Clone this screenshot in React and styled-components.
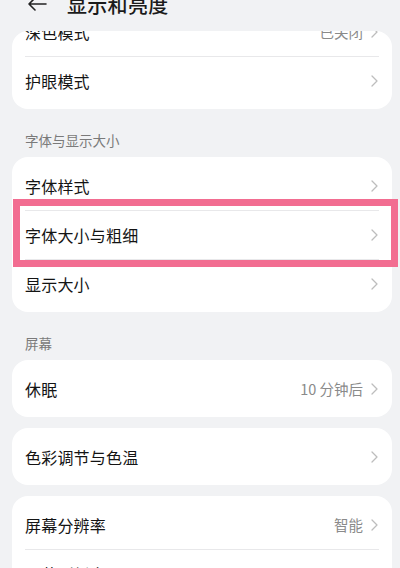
import React from 'react';
import styled, { createGlobalStyle } from 'styled-components';

const GlobalStyle = createGlobalStyle`
  html, body {
    margin: 0;
    padding: 0;
    background: #f1f2f4;
    font-family: "Noto Sans CJK SC", "Noto Sans", sans-serif;
  }
`;

const sections = [
  {
    cards: [
      {
        cut: true,
        rows: [
          { label: '深色模式', value: '已关闭' },
          { label: '护眼模式' },
        ],
      },
    ],
  },
  {
    title: '字体与显示大小',
    cards: [
      {
        rows: [
          { label: '字体样式' },
          { label: '字体大小与粗细', marked: true },
          { label: '显示大小' },
        ],
      },
    ],
  },
  {
    title: '屏幕',
    cards: [
      { rows: [{ label: '休眠', value: '10 分钟后' }] },
      { rows: [{ label: '色彩调节与色温' }] },
      {
        rows: [
          { label: '屏幕分辨率', value: '智能' },
          { label: '屏幕刷新率' },
        ],
      },
    ],
  },
];

const BackArrow = () => (
  <svg width="20" height="14" viewBox="0 0 20 14" fill="none">
    <path d="M19 7H2M8 1L2 7l6 6" stroke="#222" strokeWidth="1.6" strokeLinecap="round" strokeLinejoin="round" />
  </svg>
);

const Chevron = () => (
  <svg width="7" height="12" viewBox="0 0 7 12" fill="none">
    <path d="M1 1l5 5-5 5" stroke="#bdbdbd" strokeWidth="1.3" strokeLinecap="round" strokeLinejoin="round" />
  </svg>
);

const App = () => (
  <Screen>
    <GlobalStyle />
    <Header>
      <TitleRow>
        <BackArrow />
        <Title>显示和亮度</Title>
      </TitleRow>
    </Header>
    {sections.map((section, si) => (
      <Section key={si}>
        {section.title && <SectionTitle>{section.title}</SectionTitle>}
        {section.cards.map((card, ci) => (
          <Card key={ci} $cut={card.cut}>
            {card.rows.map((row, ri) => (
              <Row key={ri} $divider={ri > 0}>
                <Label>{row.label}</Label>
                <Trail>
                  {row.value && <Value>{row.value}</Value>}
                  <Chevron />
                </Trail>
                {row.marked && <Marker />}
              </Row>
            ))}
          </Card>
        ))}
      </Section>
    ))}
  </Screen>
);

export default App;

const Screen = styled.div`
  width: 400px;
  height: 568px;
  overflow: hidden;
  background: #f1f2f4;
  display: flex;
  flex-direction: column;
`;

const Header = styled.div`
  height: 31px;
  flex-shrink: 0;
  overflow: hidden;
`;

const TitleRow = styled.div`
  display: flex;
  align-items: center;
  gap: 20px;
  margin-top: -7px;
  padding-left: 27px;
  height: 22px;
`;

const Title = styled.div`
  font-size: 20px;
  font-weight: 500;
  color: #1b1b1b;
  letter-spacing: 0.3px;
`;

const Section = styled.div`
  display: flex;
  flex-direction: column;
  gap: 11px;
  padding: 0 8px 0 12px;
  margin-bottom: 21px;
`;

const SectionTitle = styled.div`
  font-size: 13.5px;
  color: #7a7a7a;
  padding: 0 0 0 13px;
  line-height: 20px;
  margin-bottom: -4px;
`;

const Card = styled.div`
  background: #ffffff;
  border-radius: 16px;
  padding: 4px 13px;
  position: relative;
  overflow: ${({ $cut }) => ($cut ? 'hidden' : 'visible')};
  & > div:first-child {
    margin-top: ${({ $cut }) => ($cut ? '-28px' : '0')};
  }
`;

const Row = styled.div`
  height: 49px;
  display: flex;
  align-items: center;
  justify-content: space-between;
  border-top: ${({ $divider }) => ($divider ? '1px solid #e8e8ea' : 'none')};
  box-sizing: border-box;
  position: relative;
`;

const Label = styled.div`
  font-size: 16px;
  color: #141414;
  letter-spacing: 0.2px;
`;

const Trail = styled.div`
  display: flex;
  align-items: center;
  gap: 8px;
  padding-right: 1px;
`;

const Value = styled.div`
  font-size: 14.5px;
  color: #8a8a8a;
`;

const Marker = styled.div`
  position: absolute;
  left: -12px;
  right: -19px;
  top: -12px;
  bottom: -8px;
  border: 7px solid #f26d91;
  pointer-events: none;
`;
